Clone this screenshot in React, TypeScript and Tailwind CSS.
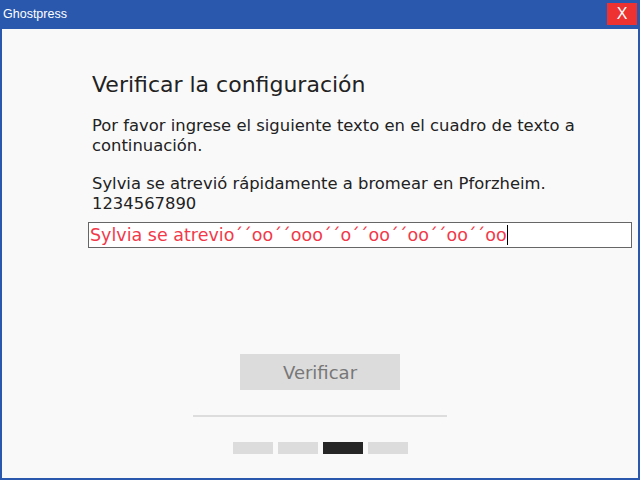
const steps = [false, false, true, false];

const App = () => {
  return (
    <div className="flex flex-col w-[640px] h-[480px] bg-[#2a58ad] font-['DejaVu_Sans',Verdana,sans-serif]">
      {/* Title bar */}
      <div className="flex items-center justify-between h-[29px] pl-[3px] pr-[3px] pt-[3px] pb-[4px]">
        <span className="text-[12.5px] text-white font-['Liberation_Sans',Tahoma,sans-serif]">Ghostpress</span>
        <button className="flex items-center justify-center w-[30px] h-[22px] bg-[#ee3131] text-white text-[16px] font-['Liberation_Sans',sans-serif]">
          X
        </button>
      </div>

      {/* Body */}
      <div className="flex flex-col flex-1 mb-[2px] mx-[2px] bg-[#f9f9f9] pt-[42px]">
        <div className="flex flex-col pl-[90px] pr-[6px]">
          <h1 className="text-[22px] leading-[28px] text-[#222]">Verificar la configuración</h1>
          <p className="mt-[17px] text-[16.4px] leading-[20px] text-[#222]">
            Por favor ingrese el siguiente texto en el cuadro de texto a continuación.
          </p>
          <p className="mt-[18px] text-[16.4px] leading-[20px] text-[#222]">
            Sylvia se atrevió rápidamente a bromear en Pforzheim. 1234567890
          </p>
          <div className="flex items-center h-[26px] mt-[8px] -ml-[4px] border border-[#666] bg-white pl-[1px]">
            <span className="text-[17.5px] leading-[22px] text-[#f2394a]">Sylvia se atrevio´´oo´´ooo´´o´´oo´´oo´´oo´´oo</span>
            <span className="w-px h-[20px] bg-black" />
          </div>
        </div>

        <div className="flex flex-col items-center mt-[106px]">
          <button className="w-[160px] h-[36px] bg-[#dcdcdc] text-[18px] text-[#777]">Verificar</button>
          <div className="w-[254px] h-[2px] mt-[25px] bg-[#ddd]" />
          <div className="flex gap-[5px] mt-[25px]">
            {steps.map((active, i) => (
              <div key={i} className={active ? 'w-[40px] h-[12px] bg-[#262626]' : 'w-[40px] h-[12px] bg-[#dcdcdc]'} />
            ))}
          </div>
        </div>
      </div>
    </div>
  );
};

export default App;
